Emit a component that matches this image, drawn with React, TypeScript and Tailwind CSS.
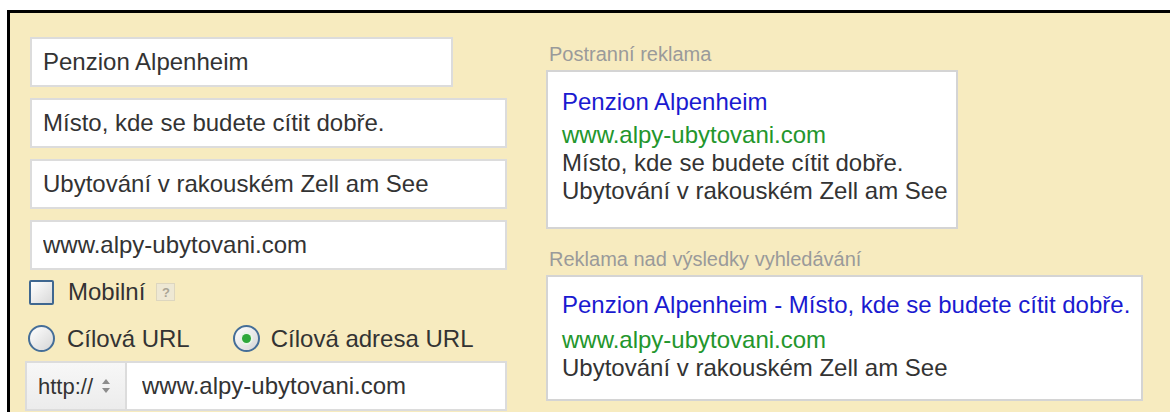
import { ReactNode } from 'react';

const font = "font-['Liberation_Sans',Arial,sans-serif]";

function TextField({ value, width = 'w-full' }: { value: string; width?: string }) {
  return (
    <input
      type="text"
      readOnly
      value={value}
      className={`${width} h-[50px] shrink-0 border-2 border-[#dcdcdc] bg-white px-[11px] text-[24px] text-[#333] outline-none`}
    />
  );
}

function Checkbox() {
  return (
    <span className="block h-[25px] w-[25px] shrink-0 rounded-[2px] border-2 border-[#3f6790] bg-linear-to-br from-white to-[#d9d9d9]" />
  );
}

function Radio({ checked }: { checked?: boolean }) {
  return (
    <span className="flex h-[27px] w-[27px] shrink-0 items-center justify-center rounded-full border-2 border-[#456e98] bg-linear-to-br from-white to-[#d6d6d6]">
      {checked && <span className="h-[9px] w-[9px] rounded-full bg-[#2da83a] ring-2 ring-[#e8f5e8]" />}
    </span>
  );
}

function AdPreview({ label, children, width }: { label: string; children: ReactNode; width: string }) {
  return (
    <div>
      <div className="h-[24px] pl-[3px] text-[20px] leading-[24px] text-[#9a9a9a]">{label}</div>
      <div className={`${width} mt-[4px] whitespace-nowrap border-2 border-[#d4d4d4] bg-white px-[14px] text-[24px] leading-[28px]`}>
        {children}
      </div>
    </div>
  );
}

export default function App() {
  return (
    <div className={`h-[412px] w-[1170px] overflow-hidden bg-white pl-[7px] pt-[10px] ${font}`}>
      <div className="flex h-[402px] gap-[39px] border-l-[3px] border-t-[3px] border-black bg-[#f7ebbf] pl-[20px] pt-[24px]">
        {/* ad text fields */}
        <div className="flex w-[477px] flex-col">
          <div className="flex flex-col gap-[11px]">
            <TextField value="Penzion Alpenheim" width="w-[423px]" />
            <TextField value="Místo, kde se budete cítit dobře." />
            <TextField value="Ubytování v rakouském Zell am See" />
            <TextField value="www.alpy-ubytovani.com" />
          </div>

          <label className="mt-[9px] flex h-[26px] items-center text-[24px] text-[#333]">
            <span className="-ml-[1px]">
              <Checkbox />
            </span>
            <span className="ml-[14px]">Mobilní</span>
            <span className="ml-[11px] flex h-[18px] w-[19px] items-center justify-center border border-[#ddd6bf] bg-[#eee8d4] text-[13px] font-bold leading-none text-[#aaa595]">
              ?
            </span>
          </label>

          <div className="mt-[20px] flex h-[27px] items-center text-[24px] text-[#333]">
            <span className="-ml-[2px]">
              <Radio />
            </span>
            <span className="ml-[12px]">Cílová URL</span>
            <span className="ml-[43px]">
              <Radio checked />
            </span>
            <span className="ml-[11px]">Cílová adresa URL</span>
          </div>

          <div className="-ml-[5px] mt-[9px] flex h-[50px] w-[482px]">
            <div className="flex w-[100px] shrink-0 items-center border-2 border-r-0 border-[#dcdcdc] bg-linear-to-b from-[#f7f7f7] to-[#ececec] pl-[11px] text-[22px] text-[#333]">
              <span>http://</span>
              <svg width="10" height="16" viewBox="0 0 10 16" className="ml-[8px]">
                <path d="M5 1 L9 6 H1 Z" fill="#8c8c8c" />
                <path d="M5 15 L9 10 H1 Z" fill="#8c8c8c" />
              </svg>
            </div>
            <input
              type="text"
              readOnly
              value="www.alpy-ubytovani.com"
              className="h-full flex-1 border-2 border-[#dcdcdc] bg-white pl-[15px] text-[24px] text-[#333] outline-none"
            />
          </div>
        </div>

        {/* previews */}
        <div className="flex flex-col pt-[5px]">
          <AdPreview label="Postranní reklama" width="w-[412px] h-[159px] pt-[16px]">
            <div className="mb-[5px] text-[#1a1ad0]">Penzion Alpenheim</div>
            <div className="text-[#23962c]">www.alpy-ubytovani.com</div>
            <div className="text-[#333]">Místo, kde se budete cítit dobře.</div>
            <div className="text-[#333]">Ubytování v rakouském Zell am See</div>
          </AdPreview>

          <div className="mt-[18px]">
            <AdPreview label="Reklama nad výsledky vyhledávání" width="w-[597px] h-[126px] pt-[14px]">
              <div className="mb-[7px] text-[#1a1ad0]">Penzion Alpenheim - Místo, kde se budete cítit dobře.</div>
              <div className="text-[#23962c]">www.alpy-ubytovani.com</div>
              <div className="text-[#333]">Ubytování v rakouském Zell am See</div>
            </AdPreview>
          </div>
        </div>
      </div>
    </div>
  );
}
